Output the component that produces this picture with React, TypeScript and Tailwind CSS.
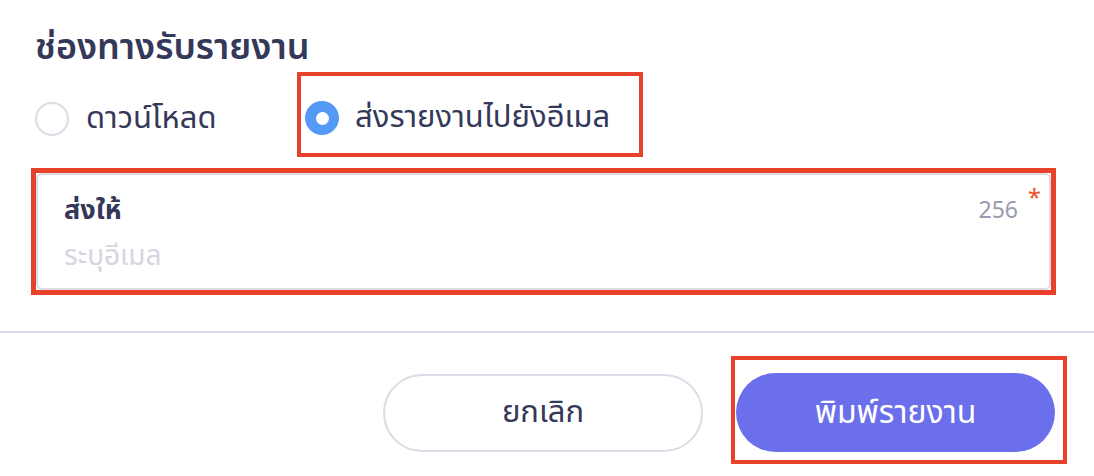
import React from 'react';

const thai = { fontFamily: '"Noto Sans Thai", "Noto Sans", "DejaVu Sans", sans-serif' };

export default function App() {
  return (
    <div className="relative h-[476px] w-[1094px] overflow-hidden bg-white text-[#343859]" style={thai}>
      <div className="px-[35px] pt-[20px]">
        <h2 className="pt-[4px] text-[36px] font-semibold leading-[48px] text-[#343859]">ช่องทางรับรายงาน</h2>

        <div className="flex items-start">
          <label className="mt-[30px] flex w-[262px] items-center">
            <span className="h-[34px] w-[34px] shrink-0 rounded-full border-2 border-[#dcdce6] bg-white" />
            <span className="ml-[17px] text-[31px] leading-[34px]">ดาวน์โหลด</span>
          </label>

          <div className="flex h-[85px] w-[346px] items-start border-4 border-[#e8432a] pl-[4px] pt-[25px]">
            <label className="flex items-center">
              <span className="flex h-[34px] w-[34px] shrink-0 items-center justify-center rounded-full bg-[#5599f6]">
                <span className="h-[13px] w-[13px] rounded-full bg-white" />
              </span>
              <span className="ml-[16px] text-[31px] leading-[34px]">ส่งรายงานไปยังอีเมล</span>
            </label>
          </div>
        </div>

        <div className="-ml-[4px] mt-[11px] h-[127px] w-[1025px] border-[5px] border-[#e8432a]">
          <div className="relative h-full rounded-[6px] border-2 border-[#dcdce6] px-[26px] pt-[19px]">
            <div className="flex items-center justify-between pr-[5px]">
              <span className="text-[27px] font-bold leading-[34px] text-[#343859]">ส่งให้</span>
              <span className="text-[23px] leading-[34px] text-[#9a9bb0]">256</span>
            </div>
            <span className="absolute right-[8px] top-[12px] text-[24px] leading-none text-[#e8532f]">*</span>
            <input
              className="mt-[12px] w-full bg-transparent text-[28px] leading-[34px] text-[#343859] outline-none placeholder:text-[#d6d6e0]"
              placeholder="ระบุอีเมล"
            />
          </div>
        </div>
      </div>

      <div className="mt-[36px] h-[2px] w-full bg-[#dcdae6]" />

      <div className="flex justify-end pr-[27px] pt-[23px]">
        <button className="mt-[18px] h-[78px] w-[320px] rounded-full border-2 border-[#dcdce6] bg-white text-[31px] text-[#343859]">
          ยกเลิก
        </button>
        <div className="ml-[28px] border-4 border-[#e8432a] pb-[8px] pl-[1px] pr-[8px] pt-[13px]">
          <button className="h-[79px] w-[319px] rounded-full bg-[#6c6feb] text-[32px] text-white">
            พิมพ์รายงาน
          </button>
        </div>
      </div>
    </div>
  );
}
